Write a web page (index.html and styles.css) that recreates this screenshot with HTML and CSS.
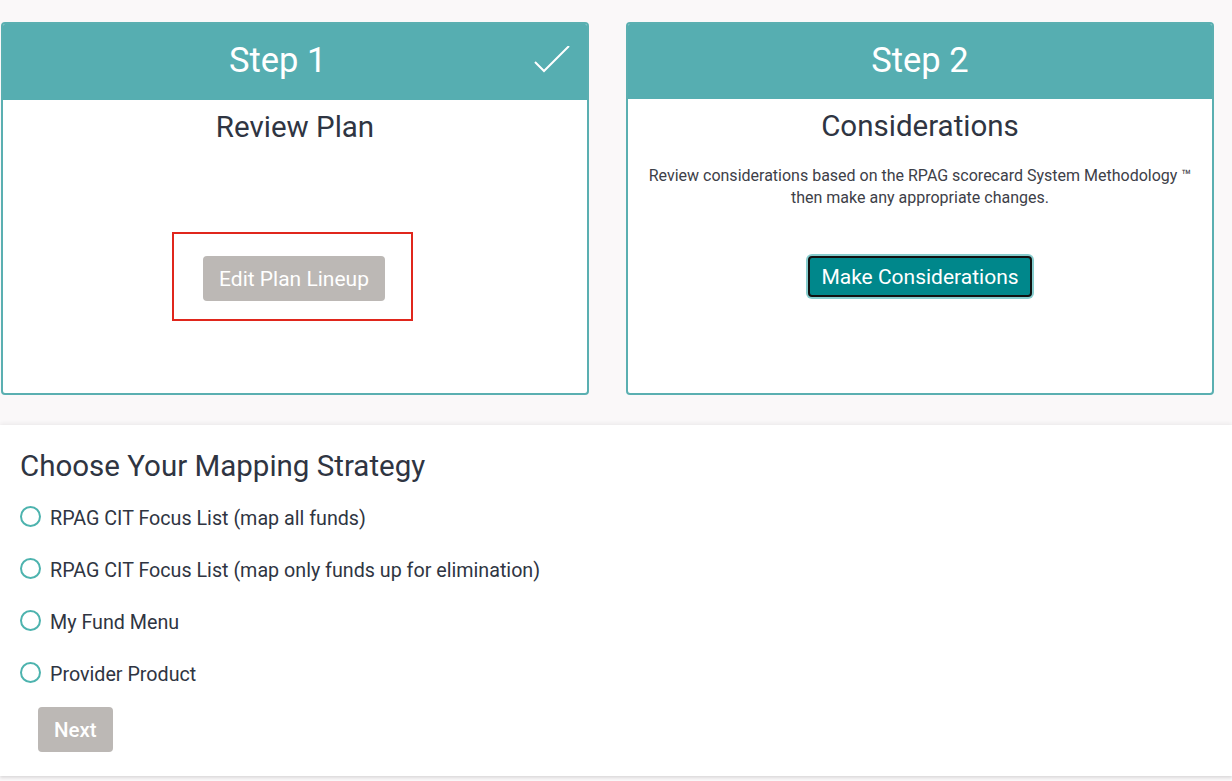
FILE: index.html
```html
<!DOCTYPE html>
<html lang="en">
<head>
<meta charset="utf-8">
<title>Mapping Strategy</title>
<link rel="stylesheet" href="styles.css">
</head>
<body>
<div class="page">
  <div class="steps">
    <section class="card">
      <header class="card-head head-1">
        <span class="step-title">Step 1</span>
        <svg class="check" width="40" height="30" viewBox="0 0 40 30" aria-hidden="true">
          <polyline points="2,16 11,25 36,0" fill="none" stroke="#fff" stroke-width="2"/>
        </svg>
      </header>
      <div class="card-body">
        <h2 class="card-title">Review Plan</h2>
        <div class="highlight">
          <button class="btn btn-gray">Edit Plan Lineup</button>
        </div>
      </div>
    </section>
    <section class="card">
      <header class="card-head">
        <span class="step-title">Step 2</span>
      </header>
      <div class="card-body">
        <h2 class="card-title">Considerations</h2>
        <p class="desc">Review considerations based on the RPAG scorecard System Methodology &trade;<br>then make any appropriate changes.</p>
        <button class="btn btn-teal">Make Considerations</button>
      </div>
    </section>
  </div>
  <section class="panel">
    <h2 class="panel-title">Choose Your Mapping Strategy</h2>
    <ul class="options">
      <li class="option"><span class="radio"></span><span class="opt-label">RPAG CIT Focus List (map all funds)</span></li>
      <li class="option"><span class="radio"></span><span class="opt-label">RPAG CIT Focus List (map only funds up for elimination)</span></li>
      <li class="option"><span class="radio"></span><span class="opt-label">My Fund Menu</span></li>
      <li class="option"><span class="radio"></span><span class="opt-label">Provider Product</span></li>
    </ul>
    <button class="btn btn-gray btn-next">Next</button>
  </section>
</div>
</body>
</html>
```

FILE: styles.css
```css
* { box-sizing: border-box; }
html, body { margin: 0; padding: 0; }
body {
  background: #faf8f9;
  font-family: Roboto, "Liberation Sans", Arial, sans-serif;
  color: #2f3542;
  width: 1232px;
  height: 781px;
  overflow: hidden;
}
.page { display: flex; flex-direction: column; }
.steps {
  display: flex;
  gap: 37px;
  padding: 22px 18px 0 1px;
}
.card {
  width: 588px;
  height: 373px;
  border: 2px solid #5aafb1;
  border-radius: 4px;
  background: #fff;
  display: flex;
  flex-direction: column;
  overflow: hidden;
}
.card-head {
  background: #56aeb1;
  height: 75px;
  display: flex;
  align-items: center;
  justify-content: center;
  position: relative;
  flex: none;
  padding-bottom: 4px;
}
.head-1 { height: 76px; justify-content: flex-start; padding-left: 226px; }
.step-title {
  color: #fff;
  font-size: 34.5px;
  line-height: 40px;
}
.check {
  position: absolute;
  left: 530px;
  top: 22px;
}
.card-body {
  display: flex;
  flex-direction: column;
  align-items: center;
  padding-top: 10px;
}
.card-title {
  margin: 0;
  font-weight: 400;
  font-size: 29.5px;
  line-height: 34px;
  color: #2f3542;
}
.highlight {
  margin-top: 88px;
  border: 2px solid #e0261c;
  padding: 22px 26px 18px 29px;
  margin-left: -5px;
}
.btn {
  font-family: Roboto, "Liberation Sans", Arial, sans-serif;
  font-size: 21px;
  border-radius: 4px;
  color: #fff;
  cursor: pointer;
  display: block;
}
.btn-gray {
  background: #bcb8b5;
  border: none;
  height: 45px;
  padding: 0 16px;
}
.desc {
  margin: 22px 0 0;
  text-align: center;
  font-size: 16px;
  line-height: 22px;
  color: #3d4048;
}
.btn-teal {
  margin-top: 47px;
  background: #00878b;
  border: 2px solid #111;
  box-shadow: 0 0 0 2px #86cdce;
  height: 41px;
  padding: 0 11px;
  margin-left: 0;
}
.panel {
  margin-top: 30px;
  background: #fff;
  height: 351px;
  box-shadow: 0 -2px 4px rgba(0,0,0,0.05), 0 2px 3px rgba(0,0,0,0.12);
  padding: 24px 0 0 20px;
  display: flex;
  flex-direction: column;
  align-items: flex-start;
}
.panel-title {
  margin: 0;
  font-weight: 400;
  font-size: 29.5px;
  line-height: 34px;
  color: #2f3542;
}
.options {
  list-style: none;
  margin: 9px 0 0;
  padding: 0;
}
.option {
  display: flex;
  align-items: center;
  height: 52px;
  gap: 9px;
}
.radio {
  width: 21px;
  height: 21px;
  border: 2px solid #4db3ae;
  border-radius: 50%;
  margin-top: -4px;
  flex: none;
}
.opt-label {
  font-size: 19.7px;
  color: #2f3542;
}
.btn-next {
  margin: 7px 0 0 18px;
  font-weight: 500;
  font-size: 20.5px;
}
```
